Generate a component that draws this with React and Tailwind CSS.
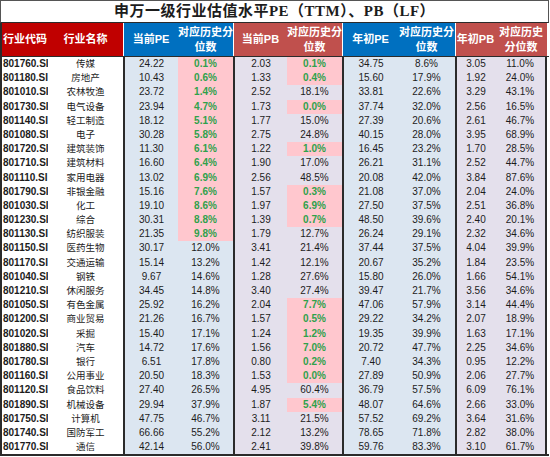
const rows = [
  ['801760.SI', '传媒', '24.22', '0.1%', '2.03', '0.1%', '34.75', '8.6%', '3.05', '11.0%'],
  ['801180.SI', '房地产', '10.43', '0.6%', '1.33', '0.4%', '15.60', '17.9%', '1.92', '24.0%'],
  ['801010.SI', '农林牧渔', '23.72', '1.4%', '2.52', '18.1%', '33.81', '22.6%', '3.29', '43.1%'],
  ['801730.SI', '电气设备', '23.94', '4.7%', '1.73', '0.0%', '37.74', '32.0%', '2.56', '16.5%'],
  ['801140.SI', '轻工制造', '18.12', '5.1%', '1.77', '15.0%', '27.39', '20.6%', '2.61', '46.7%'],
  ['801080.SI', '电子', '30.28', '5.8%', '2.75', '24.8%', '40.15', '28.0%', '3.95', '68.9%'],
  ['801720.SI', '建筑装饰', '11.30', '6.1%', '1.22', '1.0%', '16.45', '23.2%', '1.70', '28.5%'],
  ['801710.SI', '建筑材料', '16.60', '6.4%', '1.90', '17.0%', '26.21', '31.1%', '2.52', '44.7%'],
  ['801110.SI', '家用电器', '13.02', '6.9%', '2.56', '48.5%', '20.08', '42.0%', '3.84', '87.6%'],
  ['801790.SI', '非银金融', '15.16', '7.6%', '1.57', '0.3%', '21.08', '37.0%', '2.04', '24.0%'],
  ['801030.SI', '化工', '19.10', '8.6%', '1.97', '6.9%', '27.50', '37.5%', '2.51', '36.8%'],
  ['801230.SI', '综合', '30.31', '8.8%', '1.39', '0.7%', '48.50', '39.6%', '2.40', '20.1%'],
  ['801130.SI', '纺织服装', '21.35', '9.8%', '1.79', '12.7%', '26.24', '29.1%', '2.32', '34.6%'],
  ['801150.SI', '医药生物', '30.17', '12.0%', '3.41', '21.4%', '37.44', '37.5%', '4.04', '39.9%'],
  ['801170.SI', '交通运输', '15.14', '13.2%', '1.42', '12.1%', '20.67', '35.2%', '1.84', '23.5%'],
  ['801040.SI', '钢铁', '9.67', '14.6%', '1.28', '27.6%', '15.80', '26.0%', '1.66', '54.1%'],
  ['801210.SI', '休闲服务', '34.45', '14.8%', '3.40', '27.4%', '39.47', '21.7%', '3.56', '34.6%'],
  ['801050.SI', '有色金属', '25.92', '16.2%', '2.04', '7.7%', '47.06', '57.9%', '3.14', '44.4%'],
  ['801200.SI', '商业贸易', '21.26', '16.7%', '1.57', '0.5%', '29.22', '34.2%', '2.07', '18.9%'],
  ['801020.SI', '采掘', '15.40', '17.1%', '1.24', '1.2%', '19.35', '39.9%', '1.63', '17.1%'],
  ['801880.SI', '汽车', '14.72', '17.6%', '1.56', '7.0%', '20.72', '47.7%', '2.25', '34.6%'],
  ['801780.SI', '银行', '6.51', '17.8%', '0.80', '0.2%', '7.40', '34.3%', '0.95', '12.2%'],
  ['801160.SI', '公用事业', '20.50', '18.3%', '1.53', '0.0%', '27.89', '50.9%', '2.06', '27.7%'],
  ['801120.SI', '食品饮料', '27.40', '26.5%', '4.95', '60.4%', '36.79', '57.5%', '6.09', '76.1%'],
  ['801890.SI', '机械设备', '29.94', '37.9%', '1.87', '5.4%', '48.07', '64.6%', '2.66', '33.0%'],
  ['801750.SI', '计算机', '47.75', '46.7%', '3.11', '21.5%', '57.52', '69.2%', '3.64', '31.6%'],
  ['801740.SI', '国防军工', '66.66', '55.2%', '2.12', '13.2%', '78.65', '71.8%', '2.82', '38.0%'],
  ['801770.SI', '通信', '42.14', '56.0%', '2.41', '39.8%', '59.76', '83.3%', '3.10', '61.7%'],
]

// widths, body background and left rule for each column
const cols = [
  { w: 'w-[48px]', bg: 'bg-white', rule: 'border-l-2 border-[#2b2b2b]' },
  { w: 'w-[75px]', bg: 'bg-white', rule: '' },
  { w: 'w-[55px]', bg: 'bg-[#dce6f1]', rule: 'border-l-2 border-[#2b2b2b]' },
  { w: 'w-[55px]', bg: 'bg-[#dce6f1]', rule: '' },
  { w: 'w-[54px]', bg: 'bg-[#e4e0ec]', rule: 'border-l-2 border-[#2b2b2b]' },
  { w: 'w-[55px]', bg: 'bg-[#e4e0ec]', rule: '' },
  { w: 'w-[56px]', bg: 'bg-[#dce6f1]', rule: 'border-l-2 border-[#2b2b2b]' },
  { w: 'w-[57px]', bg: 'bg-[#dce6f1]', rule: '' },
  { w: 'w-[40px]', bg: 'bg-[#e4e0ec]', rule: 'border-l-2 border-[#2b2b2b]' },
  { w: 'w-[52px]', bg: 'bg-[#e4e0ec]', rule: '' },
]

const heads = [
  { label: ['行业代码'], bg: 'bg-[#c00000]', sep: '' },
  { label: ['行业名称'], bg: 'bg-[#c00000]', sep: '' },
  { label: ['当前PE'], bg: 'bg-[#0070c0]', sep: 'border-l border-white' },
  { label: ['对应历史分', '位数'], bg: 'bg-[#0070c0]', sep: '' },
  { label: ['当前PB'], bg: 'bg-[#c0504d]', sep: 'border-l border-white' },
  { label: ['对应历史分', '位数'], bg: 'bg-[#c0504d]', sep: '' },
  { label: ['年初PE'], bg: 'bg-[#0070c0]', sep: 'border-l border-white' },
  { label: ['对应历史分', '位数'], bg: 'bg-[#0070c0]', sep: '' },
  { label: ['年初PB'], bg: 'bg-[#c0504d]', sep: 'border-l border-white' },
  { label: ['对应历史', '分位数'], bg: 'bg-[#c0504d]', sep: '' },
]

const low = v => parseFloat(v) < 10

export default function App() {
  return (
    <div className="w-[550px] h-[457px] bg-white overflow-hidden font-['Liberation_Sans','Noto_Sans_CJK_SC',sans-serif] text-[#1c1c1c]">
      <div className="w-[549px]">
        {/* 标题 */}
        <div className="h-[23px] border border-[#555] border-b-[#2b2b2b] flex items-center justify-center">
          <span className="text-[15px] font-bold tracking-[0.5px] font-['Liberation_Serif','Noto_Sans_CJK_SC',serif]">
            申万一级行业估值水平PE（TTM）、PB（LF）
          </span>
        </div>

        {/* 表头 */}
        <div className="flex h-[34px] border-b border-[#2b2b2b]">
          {heads.map((h, i) => (
            <div
              key={i}
              className={`${cols[i].w} ${h.bg} ${h.sep} ${i === 0 ? 'border-l-2 border-[#2b2b2b]' : ''} flex flex-col items-center justify-center text-white font-bold text-[11px] leading-[15px]`}
            >
              {h.label.map(t => <span key={t}>{t}</span>)}
            </div>
          ))}
        </div>

        {/* 数据 */}
        <div className="border-b-2 border-[#2b2b2b]">
          {rows.map(r => (
            <div key={r[0]} className="flex h-[14.2px]">
              {r.map((v, i) => {
                const hot = (i === 3 || i === 5) && low(v)
                let cls = 'text-[10px] text-center'
                if (i === 0) cls = 'text-[10px] font-bold pl-[1px] text-left'
                if (i === 1) cls = 'text-[9.5px] text-center'
                return (
                  <div
                    key={i}
                    className={`${cols[i].w} ${cols[i].rule} ${hot ? 'bg-[#ffc7ce] text-[#2fa14b] font-bold' : cols[i].bg} ${cls} leading-[14.2px] whitespace-nowrap overflow-hidden ${i === 9 ? 'border-r-2 border-[#2b2b2b]' : ''}`}
                  >
                    {v}
                  </div>
                )
              })}
            </div>
          ))}
        </div>
      </div>
    </div>
  )
}
